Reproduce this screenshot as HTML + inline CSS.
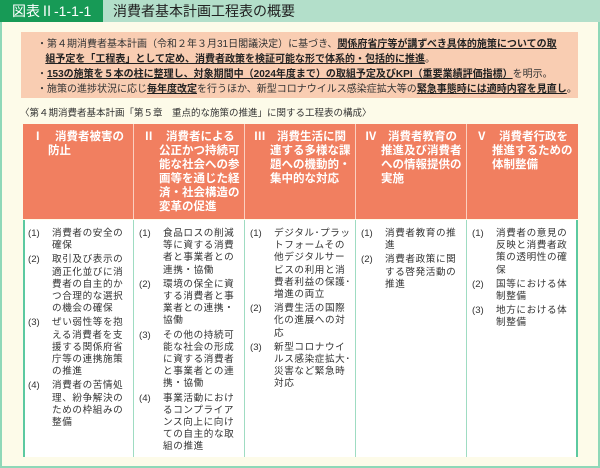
<!DOCTYPE html>
<html><head><meta charset="utf-8"><style>
*{margin:0;padding:0;box-sizing:border-box}
body{width:600px;height:468px;background:#fff;font-family:"Liberation Sans","Noto Sans CJK JP",sans-serif;position:relative;overflow:hidden}
.frame{position:absolute;left:0;top:0;width:600px;height:468px;background:#fdfbe9;border:2px solid #8fd8b8;border-top:none}
.bar{position:absolute;left:0;top:0;width:600px;height:22px;background:#b3dfca}
.lab{position:absolute;left:0;top:0;width:103px;height:22px;background:#179a56;color:#fff;font-size:14px;line-height:22px;padding-left:12px}
.ttl{position:absolute;left:113px;top:0;font-size:14px;line-height:22px;color:#222}
.note{position:absolute;left:21px;top:32px;width:557px;height:66px;background:#f9cdb2;font-size:10px;line-height:15px;color:#333;padding:5px 0 0 16px}
.note b{font-weight:bold;text-decoration:underline;text-decoration-thickness:1px;color:#222}
.note div{white-space:nowrap}
.cap{position:absolute;left:20px;top:105px;font-size:9.5px;color:#333;white-space:nowrap}
.hd{position:absolute;top:124px;height:95px;background:#f17f60;border-right:1px solid #fbd0c0}
.hd div{position:absolute;color:#fff;font-weight:bold;font-size:11.5px;line-height:14px;top:6px;white-space:nowrap}
.bd{position:absolute;top:220px;height:237px;background:#fff;border-right:1px solid #9fdcc2}
.it{position:absolute;font-size:9.6px;line-height:12.2px;color:#333;letter-spacing:.6px}
.it span{position:absolute;left:-24px;top:0;letter-spacing:0}
.it>div{position:relative;margin-top:2px}
.it>div:first-child{margin-top:0}
.p{padding-left:16px}
</style></head><body>
<div class="frame"></div>
<div class="bar"></div>
<div class="lab">図表Ⅱ-1-1-1</div>
<div class="ttl">消費者基本計画工程表の概要</div>
<div class="note">
<div>・第４期消費者基本計画（令和２年３月31日閣議決定）に基づき、<b>関係府省庁等が講ずべき具体的施策についての取</b></div>
<div>&nbsp;&nbsp;&nbsp;<b>組予定を「工程表」として定め、消費者政策を検証可能な形で体系的・包括的に推進</b>。</div>
<div>・<b>153の施策を５本の柱に整理し、対象期間中（2024年度まで）の取組予定及びKPI（重要業績評価指標）</b>を明示。</div>
<div>・施策の進捗状況に応じ<b>毎年度改定</b>を行うほか、新型コロナウイルス感染症拡大等の<b>緊急事態時には適時内容を見直し</b>。</div>
</div>
<div class="cap">〈第４期消費者基本計画「第５章　重点的な施策の推進」に関する工程表の構成〉</div>

<div class="hd" style="left:23px;width:111px"><div style="left:9px">Ⅰ　消費者被害の<br><span class="p">防止</span></div></div>
<div class="hd" style="left:134px;width:111px"><div style="left:9px">Ⅱ　消費者による<br><span class="p">公正かつ持続可</span><br><span class="p">能な社会への参</span><br><span class="p">画等を通じた経</span><br><span class="p">済・社会構造の</span><br><span class="p">変革の促進</span></div></div>
<div class="hd" style="left:245px;width:111px"><div style="left:9px">Ⅲ　消費生活に関<br><span class="p">連する多様な課</span><br><span class="p">題への機動的・</span><br><span class="p">集中的な対応</span></div></div>
<div class="hd" style="left:356px;width:111px"><div style="left:9px">Ⅳ　消費者教育の<br><span class="p">推進及び消費者</span><br><span class="p">への情報提供の</span><br><span class="p">実施</span></div></div>
<div class="hd" style="left:467px;width:111px;border-right:none"><div style="left:9px">Ⅴ　消費者行政を<br><span class="p">推進するための</span><br><span class="p">体制整備</span></div></div>

<div class="bd" style="left:23px;width:111px;border-left:2px solid #5cc9a0"></div>
<div class="bd" style="left:134px;width:111px"></div>
<div class="bd" style="left:245px;width:111px"></div>
<div class="bd" style="left:356px;width:111px"></div>
<div class="bd" style="left:467px;width:111px;border-right:2px solid #5cc9a0"></div>

<div class="it" style="left:52px;top:228px;width:80px">
<div><span>(1)</span>消費者の安全の確保</div>
<div><span>(2)</span>取引及び表示の適正化並びに消費者の自主的かつ合理的な選択の機会の確保</div>
<div><span>(3)</span>ぜい弱性等を抱える消費者を支援する関係府省庁等の連携施策の推進</div>
<div><span>(4)</span>消費者の苦情処理、紛争解決のための枠組みの整備</div>
</div>
<div class="it" style="left:163px;top:228px;width:80px">
<div><span>(1)</span>食品ロスの削減等に資する消費者と事業者との連携・協働</div>
<div><span>(2)</span>環境の保全に資する消費者と事業者との連携・協働</div>
<div><span>(3)</span>その他の持続可能な社会の形成に資する消費者と事業者との連携・協働</div>
<div><span>(4)</span>事業活動におけるコンプライアンス向上に向けての自主的な取組の推進</div>
</div>
<div class="it" style="left:274px;top:228px;width:80px">
<div><span>(1)</span>デジタル･プラットフォームその他デジタルサービスの利用と消費者利益の保護･増進の両立</div>
<div><span>(2)</span>消費生活の国際化の進展への対応</div>
<div><span>(3)</span>新型コロナウイルス感染症拡大･災害など緊急時対応</div>
</div>
<div class="it" style="left:385px;top:228px;width:80px">
<div><span>(1)</span>消費者教育の推進</div>
<div><span>(2)</span>消費者政策に関する啓発活動の推進</div>
</div>
<div class="it" style="left:496px;top:228px;width:80px">
<div><span>(1)</span>消費者の意見の反映と消費者政策の透明性の確保</div>
<div><span>(2)</span>国等における体制整備</div>
<div><span>(3)</span>地方における体制整備</div>
</div>
</body></html>
